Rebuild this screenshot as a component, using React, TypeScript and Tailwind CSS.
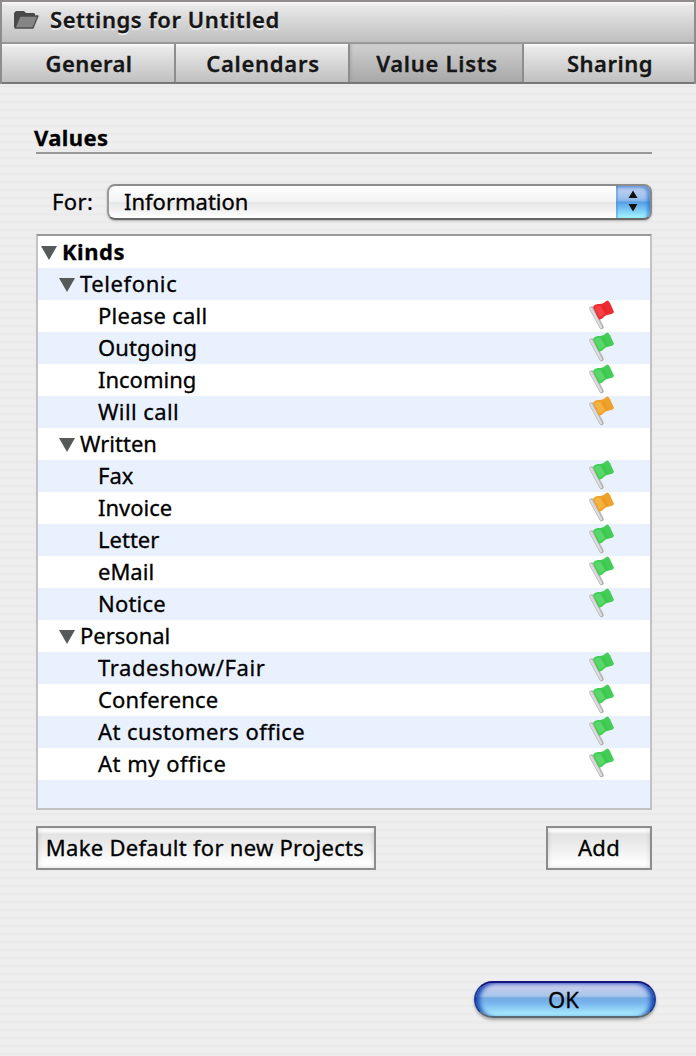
import React from 'react';
import clsx from 'clsx';

type Row = {
  label: string;
  level: 0 | 1 | 2;
  flag?: 'red' | 'green' | 'orange';
  tracking?: string;
};

const tabs = [
  { label: 'General', width: 'w-[172px]', tracking: 'tracking-[0.4px]' },
  { label: 'Calendars', width: 'w-[174px]', tracking: 'tracking-[0.7px]' },
  { label: 'Value Lists', width: 'w-[174px]', tracking: 'tracking-[0.7px]', active: true },
  { label: 'Sharing', width: 'flex-1', tracking: 'tracking-[0.5px]' },
];

const rows: Row[] = [
  { label: 'Kinds', level: 0, tracking: 'tracking-[0.5px]' },
  { label: 'Telefonic', level: 1, tracking: 'tracking-[0.6px]' },
  { label: 'Please call', level: 2, flag: 'red', tracking: 'tracking-[0.25px]' },
  { label: 'Outgoing', level: 2, flag: 'green', tracking: 'tracking-[0.1px]' },
  { label: 'Incoming', level: 2, flag: 'green' },
  { label: 'Will call', level: 2, flag: 'orange', tracking: 'tracking-[0.4px]' },
  { label: 'Written', level: 1 },
  { label: 'Fax', level: 2, flag: 'green' },
  { label: 'Invoice', level: 2, flag: 'orange' },
  { label: 'Letter', level: 2, flag: 'green' },
  { label: 'eMail', level: 2, flag: 'green' },
  { label: 'Notice', level: 2, flag: 'green', tracking: 'tracking-[0.2px]' },
  { label: 'Personal', level: 1 },
  { label: 'Tradeshow/Fair', level: 2, flag: 'green', tracking: 'tracking-[0.6px]' },
  { label: 'Conference', level: 2, flag: 'green', tracking: 'tracking-[0.2px]' },
  { label: 'At customers office', level: 2, flag: 'green', tracking: 'tracking-[0.42px]' },
  { label: 'At my office', level: 2, flag: 'green', tracking: 'tracking-[0.5px]' },
];

const flagColors = {
  red: { base: '#ee2a30', light: '#fb5c5e', dark: '#cf1f27' },
  green: { base: '#43cd55', light: '#72e67f', dark: '#2fb344' },
  orange: { base: '#efa22b', light: '#fbc75a', dark: '#d5881b' },
};

const Flag: React.FC<{ color: keyof typeof flagColors }> = ({ color }) => {
  const c = flagColors[color];
  return (
    <svg width="28" height="32" viewBox="0 0 28 32">
      <path d="M3.500 8.500 L13.500 27" stroke="#b0b0b0" strokeWidth="4.500" strokeLinecap="round" />
      <path d="M3 8.500 L13 27" stroke="#dcdcdc" strokeWidth="2.500" strokeLinecap="round" />
      <path d="M5 7 C7 4 9 4 12 4 C16 4 17 1 20 0.500 L22 3 L26 12 C24 15 21 14 18 15.500 C15 17 14.500 19.500 11 19.500 L9 16 Z" fill={c.base} />
      <path d="M6.500 8 C8 5.500 10 6 12.500 6 L17 14 C14.500 15 14 17 11.500 17.500 Z" fill={c.light} opacity=".45" />
      <path d="M15 5.500 L19.500 14" stroke={c.dark} strokeWidth="2" opacity=".3" />
    </svg>
  );
};

const Triangle = () => (
  <svg width="16" height="15" viewBox="0 0 16 15">
    <path d="M0 1 H16 L8 15 Z" fill="#555958" />
  </svg>
);

const FolderIcon = () => (
  <svg width="25" height="19" viewBox="0 0 25 19">
    <path d="M0 17 V3 L2 1 H10 L12 3 H20 L21 4 V7 H6 L1.500 18 Z" fill="#484848" />
    <path d="M6 6 H24 L19 18 H1 Z" fill="#858585" stroke="#4b4b4b" strokeWidth="1.300" strokeLinejoin="round" />
  </svg>
);

const App: React.FC = () => {
  return (
    <div className="flex h-[1056px] w-[696px] flex-col overflow-hidden bg-[repeating-linear-gradient(to_bottom,#eeeeee_0px,#eeeeee_4px,#eaeaea_6px,#eaeaea_7px,#eeeeee_8px)] font-['Noto_Sans',sans-serif] text-[22px] leading-8 text-black [-webkit-text-stroke:0.3px]">
      <header className="h-[84px] border-2 border-b-0 border-[#918c8c] text-[#161616] font-semibold [text-shadow:0_2px_1px_#ffffffb0]">
        <div className="flex h-[40px] items-center bg-[linear-gradient(#fafafa_0px,#e8e8e8_4px,#bfbfbf_100%)] pl-3 pb-[5px]">
          <FolderIcon />
          <h1 className="-mt-px ml-[11px] tracking-[0.57px]">Settings for Untitled</h1>
        </div>
        <nav className="flex h-[42px] border-t-2 border-b-2 border-t-[#999999] border-b-[#777777]">
          {tabs.map((tab, i) => (
            <button
              key={tab.label}
              type="button"
              className={clsx(
                'flex items-center justify-center pl-0.5',
                tab.width,
                tab.tracking,
                i > 0 && 'border-l-2 border-[#918c8c]',
                tab.active
                  ? 'bg-[linear-gradient(#d0d0d0,#a8a8a8)] shadow-[inset_2px_0_2px_#99999960]'
                  : 'bg-[linear-gradient(#fafafa_0px,#e9e9e9_4px,#c0c0c0_100%)]'
              )}
            >
              {tab.label}
            </button>
          ))}
        </nav>
      </header>

      <main className="flex flex-1 flex-col pr-11 pl-9">
        <h2 className="mt-[37px] -ml-0.5 h-[31px] font-bold tracking-[0.4px]">Values</h2>
        <div className="h-0.5 shrink-0 bg-[#999999]" />

        <div className="mt-[30px] flex h-9 items-center pl-4">
          <span className="w-[55px] pb-0.5 tracking-[0.4px]">For:</span>
          <div className="flex h-9 flex-1 overflow-hidden rounded-[8px] border-2 border-t-[#8c8c8c] border-r-[#888888] border-b-[#686868] border-l-[#999999] bg-[linear-gradient(#ffffff_0%,#f3f3f3_48%,#e6e6e6_52%,#ffffff_100%)] shadow-[0_1px_2px_#00000040]">
            <span className="-mt-px flex-1 pl-[15px]">Information</span>
            <span className="-my-0.5 -mr-0.5 flex h-9 w-9 items-center justify-center rounded-r-[8px] border-t-2 border-r-2 border-b-2 border-t-[#211b84] border-r-[#2458a8] border-b-[#4d6670] bg-[linear-gradient(#c5d2ef_0%,#a0c2ee_35%,#83b4ea_47%,#559ee5_50%,#76c1f4_70%,#a2f7ff_100%)] shadow-[inset_-3px_2px_3px_#1261c880,inset_2px_0_1px_#4b91dc80]">
              <svg className="-mt-0.5" width="10" height="22" viewBox="0 0 10 22">
                <path d="M5 0.500 L9.500 8 H0.500 Z M0.500 14 H9.500 L5 21.500 Z" fill="#111" />
              </svg>
            </span>
          </div>
        </div>

        <ul className="mt-3.5 h-[576px] overflow-hidden border-2 border-t-[#999999] border-r-[#c2c2c2] border-b-[#c2c2c2] border-l-[#c2c2c2]">
          {rows.map((row) => (
            <li
              key={row.label}
              className={clsx(
                'flex h-8 items-center odd:bg-white even:bg-[#eaf1fe]',
                row.tracking,
                row.level === 0 && 'pl-[3px] font-bold',
                row.level === 1 && 'pl-[21px]',
                row.level === 2 && 'pl-[60px]'
              )}
            >
              {row.level < 2 && <Triangle />}
              <span className={clsx('flex-1 pb-0.5', row.level < 2 && 'ml-[5px]')}>{row.label}</span>
              {row.flag && (
                <span className="mr-[34px]">
                  <Flag color={row.flag} />
                </span>
              )}
            </li>
          ))}
          <li className="h-8 bg-[#eaf1fe]" />
        </ul>

        <div className="mt-4 flex justify-between">
          <button
            type="button"
            className="h-11 w-[340px] border-2 border-[#8c8c8c] bg-[linear-gradient(#ffffff_0px,#ffffff_3px,#e3e3e3_6px,#eeeeee_50%,#ffffff_90%)] pr-0.5 pb-0.5 tracking-[0.28px] whitespace-nowrap shadow-[inset_0_0_5px_#00000025]"
          >
            Make Default for new Projects
          </button>
          <button
            type="button"
            className="h-11 w-[106px] border-2 border-[#8c8c8c] bg-[linear-gradient(#ffffff_0px,#ffffff_3px,#e3e3e3_6px,#eeeeee_50%,#ffffff_90%)] pb-0.5 tracking-[0.3px] shadow-[inset_0_0_5px_#00000025]"
          >
            Add
          </button>
        </div>

        <button
          type="button"
          className="mt-[111px] -mr-1 flex h-[37px] w-[182px] items-center justify-center self-end rounded-full border-2 border-t-[#171580] border-r-[#1d3d94] border-b-[#5a6872] border-l-[#1d3d94] bg-[linear-gradient(#d0cfed_0%,#a6c6ec_40%,#75aae2_45%,#78b4ed_60%,#aef1ff_100%)] pr-[3px] pb-0.5 shadow-[inset_5px_1px_5px_-2px_#0b3fb5,inset_-5px_1px_5px_-2px_#0b3fb5,0_2px_3px_#00000050]"
        >
          OK
        </button>
      </main>
    </div>
  );
};

export default App;
